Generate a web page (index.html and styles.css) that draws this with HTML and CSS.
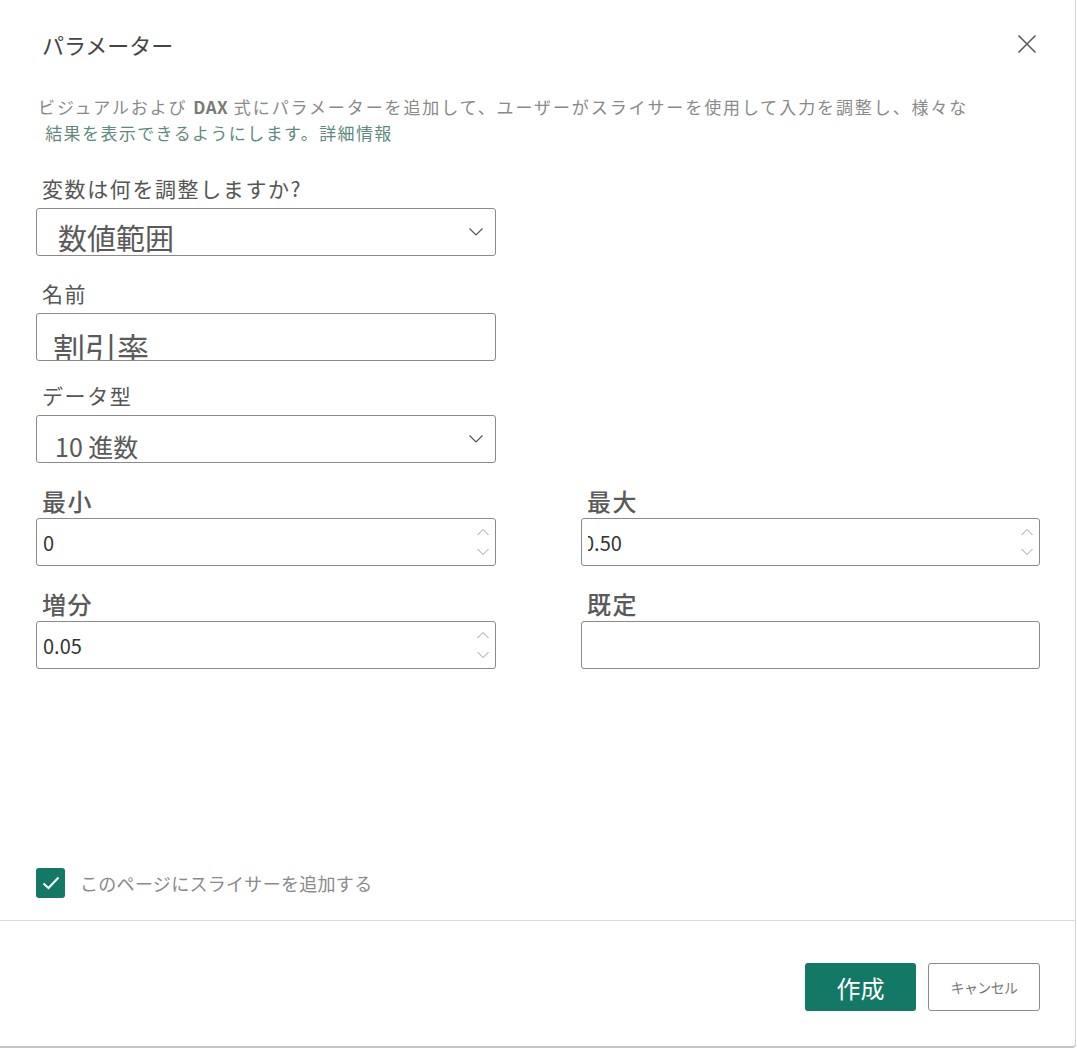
FILE: index.html
```html
<!DOCTYPE html>
<html lang="ja">
<head>
  <meta charset="UTF-8" />
  <title>パラメーター</title>
  <link rel="stylesheet" href="styles.css">
</head>
<body>
  <div class="dialog">
    <div class="dlg-head">
      <h1>パラメーター</h1>
      <button class="close" aria-label="閉じる">
        <svg width="20" height="20" viewBox="0 0 20 20"><path d="M1.5 1.5 L18.5 18.5 M18.5 1.5 L1.5 18.5" stroke="#5a5a5a" stroke-width="1.6" fill="none"/></svg>
      </button>
    </div>

    <div class="dlg-body">
      <p class="desc">
        <span class="line">ビジュアルおよび <b>DAX</b> 式にパラメーターを追加して、ユーザーがスライサーを使用して入力を調整し、様々な</span>
        <span class="line link"> 結果を表示できるようにします。詳細情報</span>
      </p>

      <div class="field">
        <label class="lbl">変数は何を調整しますか?</label>
        <div class="box select">
          <span class="val big">数値範囲</span>
          <svg class="chev" width="14" height="8" viewBox="0 0 14 8"><path d="M0.5 0.5 L7 7 L13.5 0.5" stroke="#555" stroke-width="1.2" fill="none"/></svg>
        </div>
      </div>

      <div class="field">
        <label class="lbl">名前</label>
        <div class="box">
          <span class="val bigger">割引率</span>
        </div>
      </div>

      <div class="field">
        <label class="lbl tight">データ型</label>
        <div class="box select">
          <span class="val mid">10 進数</span>
          <svg class="chev" width="14" height="8" viewBox="0 0 14 8"><path d="M0.5 0.5 L7 7 L13.5 0.5" stroke="#555" stroke-width="1.2" fill="none"/></svg>
        </div>
      </div>

      <div class="grid2">
        <div class="field">
          <label class="lbl strong">最小</label>
          <div class="box num">
            <span class="num-clip"><span class="num-val">0</span></span>
            <svg class="spin" width="14" height="28" viewBox="0 0 14 28"><path d="M1.5 7 L7 1.5 L12.5 7 M1.5 21 L7 26.5 L12.5 21" stroke="#9a9a9a" stroke-width="1" fill="none"/></svg>
          </div>
        </div>
        <div class="field">
          <label class="lbl strong">最大</label>
          <div class="box num">
            <span class="num-clip"><span class="num-val scrolled">0.50</span></span>
            <svg class="spin" width="14" height="28" viewBox="0 0 14 28"><path d="M1.5 7 L7 1.5 L12.5 7 M1.5 21 L7 26.5 L12.5 21" stroke="#9a9a9a" stroke-width="1" fill="none"/></svg>
          </div>
        </div>
        <div class="field">
          <label class="lbl strong">増分</label>
          <div class="box num">
            <span class="num-clip"><span class="num-val">0.05</span></span>
            <svg class="spin" width="14" height="28" viewBox="0 0 14 28"><path d="M1.5 7 L7 1.5 L12.5 7 M1.5 21 L7 26.5 L12.5 21" stroke="#9a9a9a" stroke-width="1" fill="none"/></svg>
          </div>
        </div>
        <div class="field">
          <label class="lbl strong">既定</label>
          <div class="box num"></div>
        </div>
      </div>

      <label class="check">
        <span class="check-box">
          <svg width="18" height="14" viewBox="0 0 18 14"><path d="M1.5 7.5 L6.5 12 L16.5 1.5" stroke="#fff" stroke-width="2" fill="none"/></svg>
        </span>
        <span class="check-text">このページにスライサーを追加する</span>
      </label>
    </div>

    <div class="dlg-foot">
      <button class="btn primary">作成</button>
      <button class="btn secondary">キャンセル</button>
    </div>
  </div>
</body>
</html>
```

FILE: styles.css
```css
:root {
  --teal: #137865;
  --border: #8a8a8a;
  --label: #555555;
}

html, body {
  margin: 0;
  padding: 0;
  background: #ffffff;
  font-family: "Noto Sans CJK JP", "Noto Sans", sans-serif;
}

.dialog {
  width: 1076px;
  height: 1048px;
  box-sizing: border-box;
  border-right: 1px solid #d0d0d0;
  border-bottom: 2px solid #c4c4c4;
  border-radius: 0 0 4px 0;
  display: flex;
  flex-direction: column;
}

.dlg-head {
  display: flex;
  justify-content: space-between;
  align-items: center;
  padding: 26px 38px 0 42px;
}

.dlg-head h1 {
  margin: 0;
  font-size: 22px;
  font-weight: 400;
  line-height: 36px;
  color: #444;
}

.close {
  border: 0;
  background: none;
  padding: 0;
  width: 20px;
  height: 20px;
  cursor: pointer;
}

.dlg-body {
  flex: 1;
  display: flex;
  flex-direction: column;
  padding: 0 36px;
}

.desc {
  margin: 32px 0 5px 2px;
  font-size: 17px;
  line-height: 26px;
  color: #8a8a8a;
  letter-spacing: 1.9px;
}

.desc .line {
  display: block;
  white-space: pre;
}

.desc b {
  font-weight: 700;
  color: #7a7a7a;
  letter-spacing: 0.5px;
}

.desc .link {
  color: #5f8a80;
  padding-left: 2px;
  letter-spacing: 1.4px;
}

.field {
  display: flex;
  flex-direction: column;
}

.lbl {
  font-size: 21px;
  line-height: 30px;
  color: var(--label);
  letter-spacing: 1.6px;
  margin: 22px 0 5px 6px;
}

.lbl.tight {
  margin-top: 19px;
}

.lbl.strong {
  font-size: 24px;
  font-weight: 500;
  color: #5a5a5a;
  margin: 23px 0 2px 6px;
}

.box {
  height: 48px;
  box-sizing: border-box;
  border: 1px solid var(--border);
  border-radius: 3px;
  display: flex;
  align-items: flex-end;
  overflow: hidden;
  width: 460px;
}

.select {
  justify-content: space-between;
}

.chev {
  align-self: center;
  margin-right: 12px;
}

.val {
  color: #5a5a5a;
  line-height: 1;
  white-space: nowrap;
}

.val.big {
  font-size: 29px;
  padding-left: 21px;
  margin-bottom: 3px;
}

.val.bigger {
  font-size: 32px;
  padding-left: 16px;
  margin-bottom: -3px;
}

.val.mid {
  font-size: 25px;
  padding-left: 18px;
  margin-bottom: 3px;
}

.grid2 {
  display: grid;
  grid-template-columns: 460px 459px;
  column-gap: 85px;
}

.grid2 .box {
  width: auto;
}

.num {
  align-items: center;
  justify-content: space-between;
}

.num-clip {
  flex: 1;
  overflow: hidden;
  margin-left: 6px;
  white-space: nowrap;
}

.num-val {
  display: inline-block;
  font-size: 20px;
  color: #333;
}

.num-val.scrolled {
  margin-left: -5px;
}

.spin {
  margin-right: 5px;
}

.check {
  margin-top: auto;
  margin-bottom: 22px;
  display: flex;
  align-items: center;
  gap: 15px;
}

.check-box {
  width: 29px;
  height: 30px;
  border-radius: 3px;
  background: var(--teal);
  display: flex;
  align-items: center;
  justify-content: center;
}

.check-text {
  font-size: 18px;
  color: #8a8a8a;
  letter-spacing: 0.3px;
}

.dlg-foot {
  border-top: 1px solid #dcdcdc;
  display: flex;
  justify-content: flex-end;
  gap: 12px;
  padding: 42px 35px 35px 0;
}

.btn {
  height: 48px;
  box-sizing: border-box;
  border-radius: 3px;
  font-family: inherit;
  cursor: pointer;
}

.btn.primary {
  width: 111px;
  background: var(--teal);
  border: 0;
  color: #fff;
  font-size: 24px;
}

.btn.secondary {
  width: 112px;
  background: #fff;
  border: 1px solid #8a8a8a;
  color: #777;
  font-size: 14px;
  letter-spacing: -0.6px;
}
```
